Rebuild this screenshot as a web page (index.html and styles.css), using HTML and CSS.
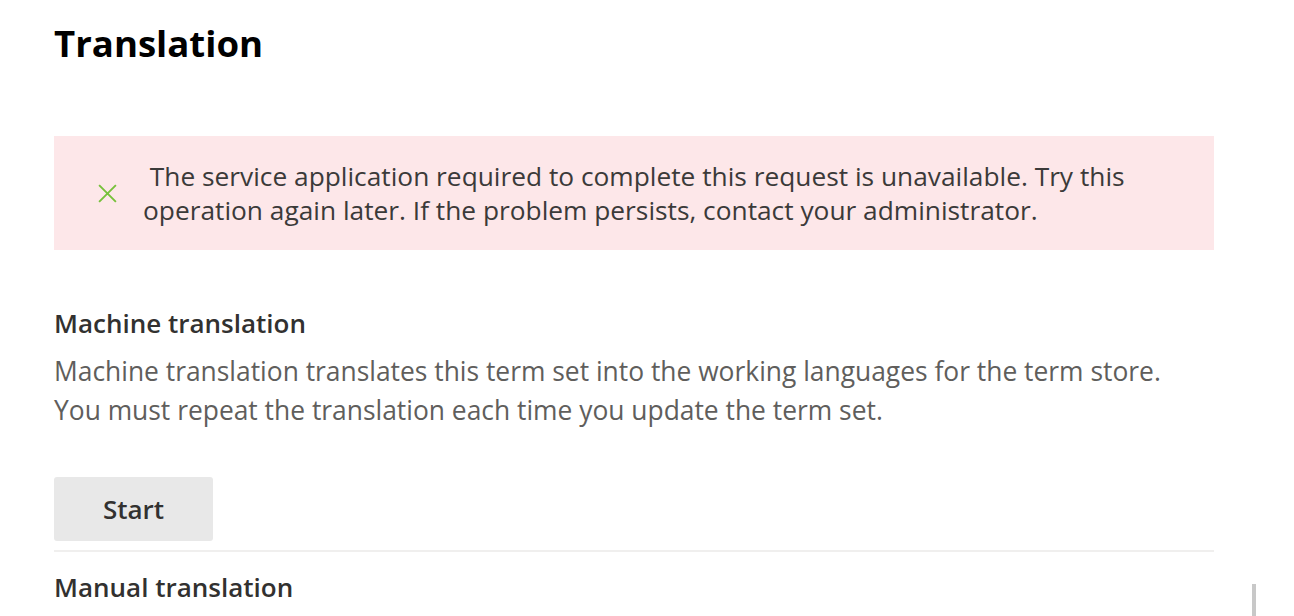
FILE: index.html
```html
<!DOCTYPE html>
<html lang="en">
<head>
<meta charset="utf-8">
<title>Translation</title>
<link rel="stylesheet" href="styles.css">
</head>
<body>
<main class="page">
  <h1 class="title">Translation</h1>
  <div class="banner">
    <svg class="banner-icon" viewBox="0 0 20 20" aria-hidden="true">
      <path d="M2 2 L18 18 M18 2 L2 18" />
    </svg>
    <p class="banner-text">&nbsp;The service application required to complete this request is unavailable. Try this operation again later. If the problem persists, contact your administrator.</p>
  </div>
  <section class="section">
    <h2 class="section-title">Machine translation</h2>
    <p class="section-desc">Machine translation translates this term set into the working languages for the term store. You must repeat the translation each time you update the term set.</p>
    <button class="btn" type="button">Start</button>
  </section>
  <hr class="divider">
  <h2 class="section-title section-title--manual">Manual translation</h2>
</main>
<div class="scroll-thumb"></div>
</body>
</html>
```

FILE: styles.css
```css
html, body {
  margin: 0;
  padding: 0;
  background: #ffffff;
  overflow: hidden;
}

body {
  font-family: "Open Sans", "Noto Sans", sans-serif;
  color: #323130;
  width: 1294px;
  height: 616px;
  position: relative;
}

.page {
  width: 1160px;
  padding: 19px 0 0 54px;
}

.title {
  margin: 0;
  font-size: 36.6px;
  line-height: 48px;
  font-weight: 700;
  color: #000000;
}

.banner {
  margin-top: 69px;
  background: #fde7e9;
  display: flex;
  align-items: center;
  padding: 23px 20px 23px 43px;
}

.banner-icon {
  width: 21px;
  height: 21px;
  flex: none;
  margin-right: 25px;
}

.banner-icon path {
  stroke: #76c13a;
  stroke-width: 1.8;
  fill: none;
}

.banner-text {
  margin: 0;
  font-size: 26.3px;
  line-height: 34px;
  color: #3b3a39;
}

.section-title {
  margin: 57px 0 0;
  font-size: 26px;
  line-height: 32px;
  font-weight: 600;
  color: #323130;
}

.section-desc {
  margin: 13px 0 0;
  max-width: 1140px;
  font-size: 26.4px;
  line-height: 39px;
  color: #605e5c;
}

.btn {
  margin-top: 47px;
  width: 159px;
  height: 64px;
  border: none;
  border-radius: 3px;
  background: #e8e8e8;
  font-family: inherit;
  font-size: 26px;
  font-weight: 600;
  color: #323130;
  display: flex;
  align-items: center;
  justify-content: center;
  padding: 0;
}

.divider {
  margin: 9px 0 0;
  border: none;
  height: 2px;
  background: #f0efee;
}

.section-title--manual {
  margin-top: 19px;
}

.scroll-thumb {
  position: absolute;
  left: 1252px;
  top: 584px;
  width: 4px;
  height: 32px;
  background: #c8c8c8;
}
```
